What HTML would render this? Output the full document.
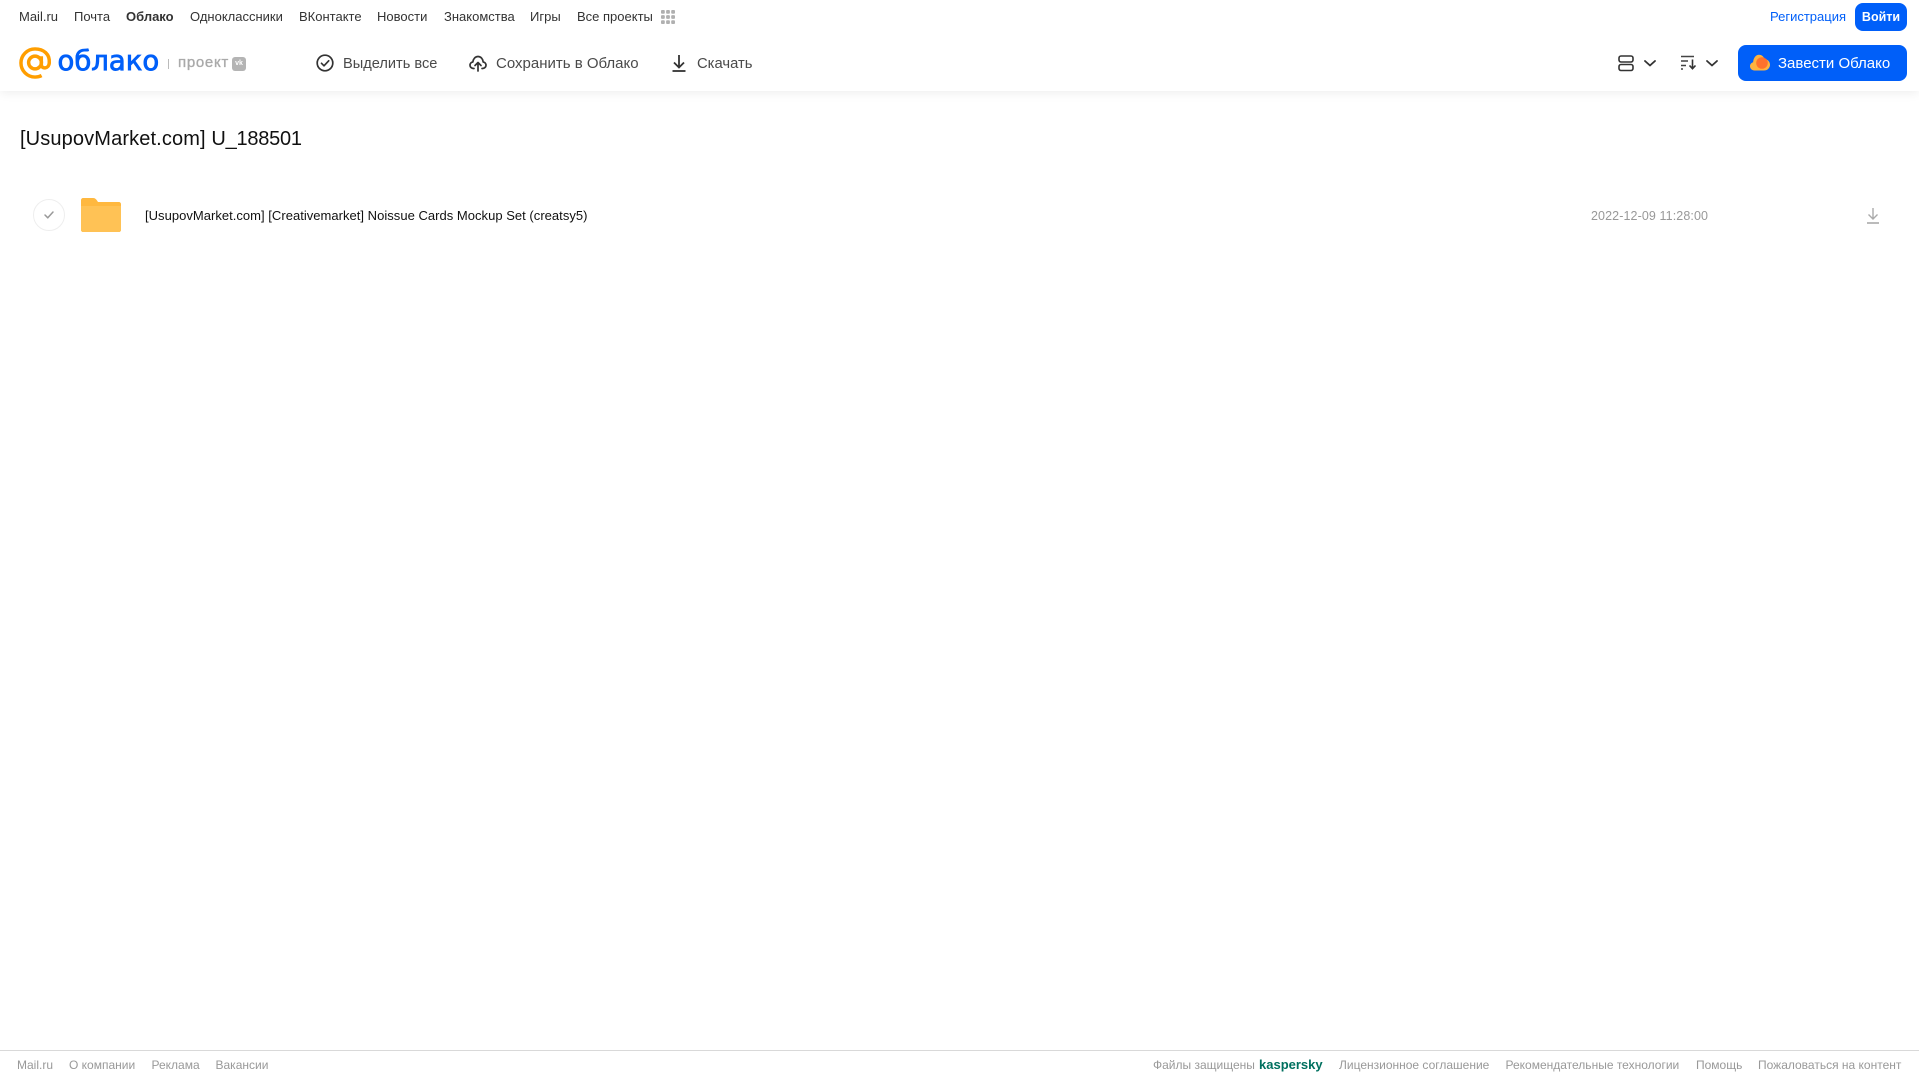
<!DOCTYPE html>
<html lang="ru"><head><meta charset="utf-8"><title>Облако</title>
<style>
html,body{margin:0;padding:0;background:#fff;width:1919px;height:1079px;overflow:hidden}
body{position:relative;font-family:"Liberation Sans",Arial,sans-serif}
.t{position:absolute;white-space:nowrap;line-height:20px}
.n{top:7px;font-size:13px;color:#333}
.b{top:54px;font-size:15px;color:#4a4a4a}
.f{top:1055px;font-size:12px;color:#999}
svg{position:absolute;overflow:visible}
</style></head><body>
<div style="position:absolute;left:0;top:0;width:1919px;height:91px;background:#fff;box-shadow:0 2px 10px rgba(0,0,0,.07)"></div>

<div class="t n" style="left:19px">Mail.ru</div>
<div class="t n" style="left:74px">Почта</div>
<div class="t n" style="left:126px;font-weight:bold">Облако</div>
<div class="t n" style="left:190px">Одноклассники</div>
<div class="t n" style="left:299px">ВКонтакте</div>
<div class="t n" style="left:377px">Новости</div>
<div class="t n" style="left:444px">Знакомства</div>
<div class="t n" style="left:530px">Игры</div>
<div class="t n" style="left:577px">Все проекты</div>
<svg style="left:661px;top:10px" width="14" height="14" fill="#b0b0b0"><rect x="0" y="0" width="3.800" height="3.800" rx="1"/><rect x="5.100" y="0" width="3.800" height="3.800" rx="1"/><rect x="10.200" y="0" width="3.800" height="3.800" rx="1"/><rect x="0" y="5.100" width="3.800" height="3.800" rx="1"/><rect x="5.100" y="5.100" width="3.800" height="3.800" rx="1"/><rect x="10.200" y="5.100" width="3.800" height="3.800" rx="1"/><rect x="0" y="10.200" width="3.800" height="3.800" rx="1"/><rect x="5.100" y="10.200" width="3.800" height="3.800" rx="1"/><rect x="10.200" y="10.200" width="3.800" height="3.800" rx="1"/></svg>

<svg style="left:18.500px;top:46.500px" width="33" height="32" viewBox="0 0 34 33" fill="none" stroke="#ff9e00" stroke-width="3.600"><circle cx="16.500" cy="16" r="6.600"/><path d="M23 9.500v8.500c0 5 7.500 5 8.200-1.500C32 7.500 25.500 2 16.500 2 8.500 2 2 8.500 2 16.500S8.500 31 16.500 31c2.600 0 4.800-.5 6.800-1.500"/></svg>
<div class="t" style="left:57.500px;top:45px;font-size:27.500px;line-height:32px;color:#005ff9;font-family:'DejaVu Sans',sans-serif;-webkit-text-stroke:.8px #005ff9">облако</div>
<div style="position:absolute;left:168px;top:59px;width:1px;height:10px;background:#bbb"></div>
<div class="t" style="left:178px;top:53px;font-size:15px;color:#a9a9a9;letter-spacing:.7px;-webkit-text-stroke:.35px #a9a9a9">проект</div>
<div class="t" style="left:232px;top:57px;width:14px;height:14px;border-radius:3px;background:#b4b4b4;color:#fff;font-size:7px;font-weight:bold;line-height:14px;text-align:center">vk</div>

<svg style="left:316px;top:54px" width="18" height="18" fill="none" stroke="#333" stroke-width="1.700"><circle cx="9" cy="9" r="7.800"/><path d="M5.500 9.300l2.500 2.500 4.700-5" stroke-linecap="round" stroke-linejoin="round"/></svg>
<div class="t b" style="left:343px;font-size:14.600px">Выделить все</div>
<svg style="left:469px;top:54px" width="18" height="18" fill="none" stroke="#333" stroke-width="1.700" stroke-linecap="round" stroke-linejoin="round"><path d="M5 14.500H4.500C2.500 14.500 1 13 1 11.200 1 9.500 2.200 8.200 3.800 8 4.200 4.800 6.300 2.500 9 2.500c2.800 0 4.900 2.300 5.200 5.500 1.600.2 2.800 1.500 2.800 3.200 0 1.800-1.500 3.300-3.500 3.300H13"/><path d="M9 17V9M6 11.500L9 8.500l3 3"/></svg>
<div class="t b" style="left:496px">Сохранить в Облако</div>
<svg style="left:671px;top:54px" width="16" height="18" fill="none" stroke="#333" stroke-width="1.800"><path d="M8 1v12M3 8.500l5 5 5-5"/><path d="M1.500 17h13"/></svg>
<div class="t b" style="left:697px;font-size:14.800px">Скачать</div>

<svg style="left:1618px;top:55px" width="16" height="16" fill="none" stroke="#333" stroke-width="1.600"><rect x="1" y="1" width="14" height="6" rx="2"/><rect x="1" y="9.500" width="14" height="6" rx="2"/></svg>
<svg style="left:1644px;top:60px" width="12" height="7" fill="none" stroke="#333" stroke-width="1.800" stroke-linecap="round" stroke-linejoin="round"><path d="M1 1l5 4.500L11 1"/></svg>
<svg style="left:1681px;top:55px" width="16" height="15" fill="none" stroke="#444" stroke-width="1.400"><path d="M0 1.500h13M0 6h7M0 10.500h5M0 14h2"/><path d="M11.500 4.500v9M8.500 10.500l3 3.200 3-3.200" stroke="#333" stroke-width="1.600"/></svg>
<svg style="left:1706px;top:60px" width="12" height="7" fill="none" stroke="#333" stroke-width="1.800" stroke-linecap="round" stroke-linejoin="round"><path d="M1 1l5 4.500L11 1"/></svg>

<div class="t" style="left:1770px;top:7px;font-size:13px;color:#005ff9">Регистрация</div>
<div class="t" style="left:1855px;top:3px;width:52px;height:28px;line-height:28px;border-radius:8px;background:#005ff9;color:#fff;font-size:12.500px;font-weight:bold;text-align:center">Войти</div>
<div style="position:absolute;left:1738px;top:45px;width:169px;height:36px;border-radius:8px;background:#005ff9"></div>
<svg style="left:1750px;top:54px" width="20" height="17"><path d="M4.500 16.500C2 16.500 0 14.700 0 12.300c0-2 1.300-3.600 3.100-4.100C3.500 3.800 6 .8 9 .8c2.500 0 4.600 1.700 5.500 4.200 3 .2 5.500 2.600 5.500 5.700 0 3.300-2.700 5.800-6 5.800z" fill="#ffb33e"/><circle cx="12" cy="9" r="5.800" fill="#ff6a2a" opacity=".9"/></svg>
<div class="t" style="left:1778px;top:53.500px;font-size:15px;color:#fff">Завести Облако</div>

<div class="t" style="left:20px;top:126.500px;font-size:20px;line-height:24px;color:#111"><span style="letter-spacing:.13px">[UsupovMarket.com] </span><span style="letter-spacing:-.25px">U_188501</span></div>

<div style="position:absolute;left:33px;top:199px;width:30px;height:30px;border:1px solid #eeeeee;border-radius:50%"></div>
<svg style="left:43px;top:210px" width="12" height="10" fill="none" stroke="#999" stroke-width="1.500" stroke-linecap="round" stroke-linejoin="round"><path d="M2 5l2.800 2.800L10 2"/></svg>
<svg style="left:81px;top:198px" width="40" height="34"><path d="M2 0h10c2 0 3 1 4 2.500L17 4h21c1 0 2 1 2 2v26c0 1-1 2-2 2H2c-1 0-2-1-2-2V2C0 1 1 0 2 0z" fill="#ffb83f"/><path d="M0 8h40v24c0 1-1 2-2 2H2c-1 0-2-1-2-2z" fill="#ffc255"/></svg>
<div class="t" style="left:145px;top:206px;font-size:13px;letter-spacing:.025px;color:#111">[UsupovMarket.com] [Creativemarket] Noissue Cards Mockup Set (creatsy5)</div>
<div class="t" style="left:1591px;top:206px;font-size:12.500px;letter-spacing:.1px;color:#999">2022-12-09 11:28:00</div>
<svg style="left:1866px;top:207px" width="14" height="17" fill="none" stroke="#aaa" stroke-width="1.400"><path d="M7 1v11M2.500 7.500L7 12l4.500-4.500"/><path d="M1 16h12" stroke-width="1.600"/></svg>

<div style="position:absolute;left:0;top:1050px;width:1919px;height:1px;background:#d9d9d9"></div>
<div class="t f" style="left:17px">Mail.ru</div>
<div class="t f" style="left:69px">О компании</div>
<div class="t f" style="left:151.500px">Реклама</div>
<div class="t f" style="left:215.500px">Вакансии</div>
<div class="t f" style="left:1153px">Файлы защищены</div>
<div class="t f" style="left:1259px;font-size:13px;font-weight:bold;color:#00705f">kaspersky</div>
<div class="t f" style="left:1339px">Лицензионное соглашение</div>
<div class="t f" style="left:1505.500px">Рекомендательные технологии</div>
<div class="t f" style="left:1696px">Помощь</div>
<div class="t f" style="left:1758px">Пожаловаться на контент</div>
</body></html>
